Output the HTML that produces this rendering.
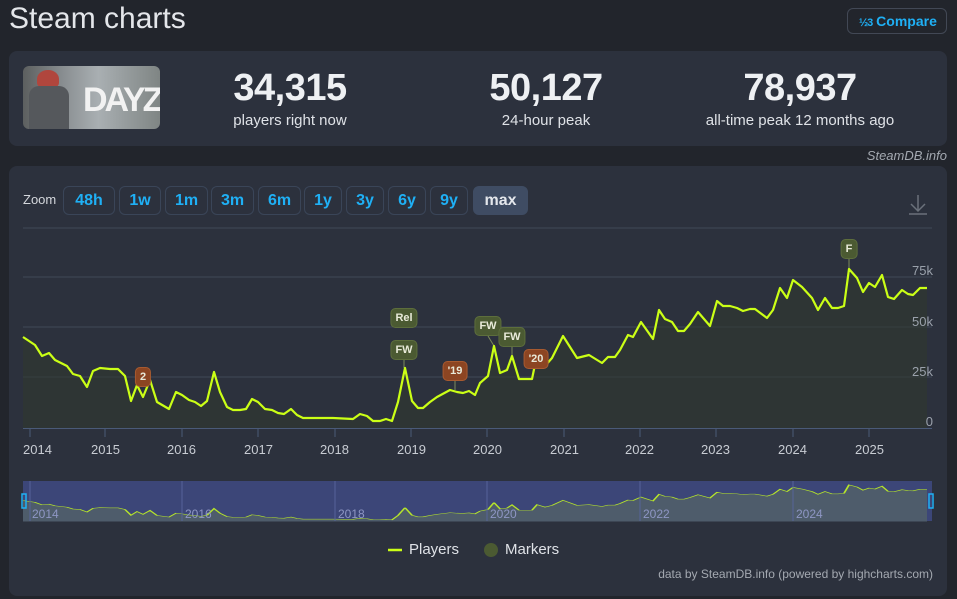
<!DOCTYPE html>
<html><head><meta charset="utf-8"><style>
*{margin:0;padding:0;box-sizing:border-box}
body{width:957px;height:599px;background:#22252c;font-family:"Liberation Sans",sans-serif;position:relative;overflow:hidden;color:#e6e8ec}
.abs{position:absolute}
.card{background:#2c313d;border-radius:8px}
.stat{position:absolute;text-align:center}
.stat b{display:block;font-size:38px;font-weight:bold;color:#eef0f3;letter-spacing:-0.5px;line-height:40px}
.stat span{display:block;font-size:15px;color:#dfe2e7;margin-top:4px}
.btn{position:absolute;top:186px;height:29px;border:1px solid #3a4558;border-radius:6px;color:#1fb0f5;font-weight:bold;font-size:16px;text-align:center;line-height:27px}
.lbl{position:absolute;font-size:13px;color:#c8ccd3}
.yl{position:absolute;font-size:13px;color:#9aa1ab;right:24px}
.mk{position:absolute;height:20px;border-radius:5px;font-size:11px;font-weight:bold;color:#e8ead9;text-align:center;line-height:19px;padding:0 4px;transform:translateX(-50%)}
.g{background:#4b5a32;border:1px solid #5d6e3c}
.o{background:#8c4522;border:1px solid #a75a30}
</style></head><body>
<div class="abs" style="left:9px;top:2px;font-size:30px;color:#e4e6ea">Steam charts</div>
<div class="abs" style="left:847px;top:8px;width:100px;height:26px;border:1px solid #424855;border-radius:6px;color:#1fb0f5;font-weight:bold;font-size:14px;line-height:24px;padding-left:11px"><span style="font-size:11px;letter-spacing:-1px">½3</span>&nbsp;Compare</div>

<div class="card abs" style="left:9px;top:51px;width:938px;height:95px"></div>
<div class="abs" style="left:23px;top:66px;width:137px;height:63px;border-radius:6px;overflow:hidden;background:linear-gradient(90deg,#5c5f5f 0%,#8a8f92 30%,#a9afb2 55%,#7f8584 100%)">
 <div class="abs" style="left:14px;top:4px;width:22px;height:18px;border-radius:50% 50% 30% 30%;background:#b0463d"></div>
 <div class="abs" style="left:6px;top:20px;width:40px;height:43px;background:#55585c;border-radius:10px 10px 0 0"></div>
 <div class="abs" style="left:60px;top:14px;font-size:34px;font-weight:bold;color:#f2f2f2;letter-spacing:-3px;line-height:40px">DAYZ</div>
</div>
<div class="stat" style="left:200px;top:68px;width:180px"><b>34,315</b><span>players right now</span></div>
<div class="stat" style="left:456px;top:68px;width:180px"><b>50,127</b><span>24-hour peak</span></div>
<div class="stat" style="left:690px;top:68px;width:220px"><b>78,937</b><span>all-time peak 12 months ago</span></div>
<div class="abs" style="right:10px;top:148px;font-size:13px;font-style:italic;color:#a4a9b1">SteamDB.info</div>

<div class="card abs" style="left:9px;top:166px;width:938px;height:430px"></div>
<div class="abs" style="left:23px;top:192px;font-size:13px;color:#d4d7dc">Zoom</div>
<div class="btn" style="left:63px;width:52px">48h</div>
<div class="btn" style="left:119px;width:42px">1w</div>
<div class="btn" style="left:165px;width:43px">1m</div>
<div class="btn" style="left:211px;width:43px">3m</div>
<div class="btn" style="left:258px;width:43px">6m</div>
<div class="btn" style="left:304px;width:38px">1y</div>
<div class="btn" style="left:346px;width:38px">3y</div>
<div class="btn" style="left:388px;width:38px">6y</div>
<div class="btn" style="left:430px;width:38px">9y</div>
<div class="btn" style="left:473px;width:55px;background:#3f4c63;border-color:#3f4c63;color:#e4e7ec">max</div>

<svg class="abs" style="left:0;top:0" width="957" height="599">
<g stroke="#414958" stroke-width="1">
<line x1="23" y1="228" x2="932" y2="228"/><line x1="23" y1="277" x2="932" y2="277"/><line x1="23" y1="327" x2="932" y2="327"/><line x1="23" y1="377" x2="932" y2="377"/>
</g>
<line x1="23" y1="428.5" x2="932" y2="428.5" stroke="#4a5a78"/>
<g stroke="#4a5a78"><line x1="30" y1="428" x2="30" y2="437"/><line x1="105" y1="428" x2="105" y2="437"/><line x1="182" y1="428" x2="182" y2="437"/><line x1="258" y1="428" x2="258" y2="437"/><line x1="335" y1="428" x2="335" y2="437"/><line x1="411" y1="428" x2="411" y2="437"/><line x1="487" y1="428" x2="487" y2="437"/><line x1="564" y1="428" x2="564" y2="437"/><line x1="640" y1="428" x2="640" y2="437"/><line x1="716" y1="428" x2="716" y2="437"/><line x1="793" y1="428" x2="793" y2="437"/><line x1="869" y1="428" x2="869" y2="437"/></g>
<g stroke="#7c8a5a" stroke-width="1"><line x1="404" y1="359" x2="404" y2="368"/><line x1="488" y1="336" x2="494" y2="346"/><line x1="512" y1="347" x2="512" y2="356"/><line x1="849" y1="259" x2="849" y2="269"/><line x1="455" y1="381" x2="455" y2="390"/></g>
<defs>
<polyline id="d" points="23,337 35,345 42,356 49,353 55,360 67,366 73,374 80,376 87,387 93,371 100,368 110,369 118,369 125,376 131,401 137,385 143,397 150,380 157,402 169,409 176,392 182,395 189,400 195,402 201,406 207,401 214,372 220,392 227,407 233,410 240,410 246,409 252,399 258,402 265,409 272,410 278,413 284,414 291,409 297,415 303,418 333,418 353,419 360,414 367,416 373,421 380,421 386,419 392,421 398,402 405,368 412,401 418,408 423,408 430,402 437,397 450,390 457,392 463,393 469,391 475,395 480,383 488,376 494,346 500,373 507,370 512,356 519,379 532,379 537,355 545,366 552,358 563,336 577,358 589,355 602,363 608,357 615,357 620,350 628,335 633,337 641,322 653,339 659,310 665,319 672,322 678,331 684,331 690,324 698,312 710,326 717,301 723,306 730,306 737,308 743,311 750,309 755,309 767,318 773,310 780,288 787,298 793,280 802,287 812,298 818,310 825,298 832,308 838,308 844,306 849,269 857,278 863,292 869,283 875,287 882,275 888,297 894,299 902,290 908,294 913,295 920,288 927,288"/>
<polygon id="a" points="23,428 23,337 35,345 42,356 49,353 55,360 67,366 73,374 80,376 87,387 93,371 100,368 110,369 118,369 125,376 131,401 137,385 143,397 150,380 157,402 169,409 176,392 182,395 189,400 195,402 201,406 207,401 214,372 220,392 227,407 233,410 240,410 246,409 252,399 258,402 265,409 272,410 278,413 284,414 291,409 297,415 303,418 333,418 353,419 360,414 367,416 373,421 380,421 386,419 392,421 398,402 405,368 412,401 418,408 423,408 430,402 437,397 450,390 457,392 463,393 469,391 475,395 480,383 488,376 494,346 500,373 507,370 512,356 519,379 532,379 537,355 545,366 552,358 563,336 577,358 589,355 602,363 608,357 615,357 620,350 628,335 633,337 641,322 653,339 659,310 665,319 672,322 678,331 684,331 690,324 698,312 710,326 717,301 723,306 730,306 737,308 743,311 750,309 755,309 767,318 773,310 780,288 787,298 793,280 802,287 812,298 818,310 825,298 832,308 838,308 844,306 849,269 857,278 863,292 869,283 875,287 882,275 888,297 894,299 902,290 908,294 913,295 920,288 927,288 927,428"/>
</defs>
<use href="#a" fill="#31392f" opacity="0.6"/>
<use href="#d" fill="none" stroke="#cbff16" stroke-width="2.2" stroke-linejoin="round"/>
<rect x="23" y="481" width="909" height="40" fill="#3c4678"/>
<g transform="translate(0,423) scale(1,0.23)">
<use href="#a" fill="#4e5c6b"/>
<use href="#d" fill="none" stroke="#b6e52a" stroke-width="2" vector-effect="non-scaling-stroke"/>
</g>
<g stroke="#56639a"><line x1="30" y1="481" x2="30" y2="521"/><line x1="182" y1="481" x2="182" y2="521"/><line x1="335" y1="481" x2="335" y2="521"/><line x1="487" y1="481" x2="487" y2="521"/><line x1="640" y1="481" x2="640" y2="521"/><line x1="793" y1="481" x2="793" y2="521"/></g>
<g font-family="Liberation Sans" font-size="12" fill="#8e96c4"><text x="32" y="518">2014</text><text x="185" y="518">2016</text><text x="338" y="518">2018</text><text x="490" y="518">2020</text><text x="643" y="518">2022</text><text x="796" y="518">2024</text></g>
<rect x="22" y="494" width="4" height="14" fill="none" stroke="#1fb0f5" stroke-width="1.5"/>
<rect x="929" y="494" width="4" height="14" fill="none" stroke="#1fb0f5" stroke-width="1.5"/>
<g stroke="#6b717b" stroke-width="1.5" fill="none"><line x1="918" y1="195" x2="918" y2="211"/><polyline points="911,204 918,211 925,204"/><line x1="909" y1="214" x2="927" y2="214"/></g>
<line x1="388" y1="550" x2="402" y2="550" stroke="#cbff16" stroke-width="2.5"/>
<circle cx="491" cy="550" r="7" fill="#4b5a32"/>
</svg>
<div class="lbl" style="left:23px;top:442px">2014</div>
<div class="lbl" style="left:91px;top:442px">2015</div>
<div class="lbl" style="left:167px;top:442px">2016</div>
<div class="lbl" style="left:244px;top:442px">2017</div>
<div class="lbl" style="left:320px;top:442px">2018</div>
<div class="lbl" style="left:397px;top:442px">2019</div>
<div class="lbl" style="left:473px;top:442px">2020</div>
<div class="lbl" style="left:550px;top:442px">2021</div>
<div class="lbl" style="left:625px;top:442px">2022</div>
<div class="lbl" style="left:701px;top:442px">2023</div>
<div class="lbl" style="left:778px;top:442px">2024</div>
<div class="lbl" style="left:855px;top:442px">2025</div>
<div class="yl" style="top:263px">75k</div>
<div class="yl" style="top:314px">50k</div>
<div class="yl" style="top:364px">25k</div>
<div class="yl" style="top:414px">0</div>
<div class="mk g" style="left:404px;top:308px">Rel</div>
<div class="mk g" style="left:404px;top:340px">FW</div>
<div class="mk o" style="left:455px;top:361px">'19</div>
<div class="mk g" style="left:488px;top:316px">FW</div>
<div class="mk g" style="left:512px;top:327px">FW</div>
<div class="mk o" style="left:536px;top:349px">'20</div>
<div class="mk o" style="left:143px;top:367px">2</div>
<div class="mk g" style="left:849px;top:239px">F</div>
<div class="abs" style="left:409px;top:541px;font-size:15px;color:#dfe2e7">Players</div>
<div class="abs" style="left:505px;top:541px;font-size:15px;color:#dfe2e7">Markers</div>
<div class="abs" style="right:24px;top:567px;font-size:12px;color:#a4a9b1">data by SteamDB.info (powered by highcharts.com)</div>
</body></html>
